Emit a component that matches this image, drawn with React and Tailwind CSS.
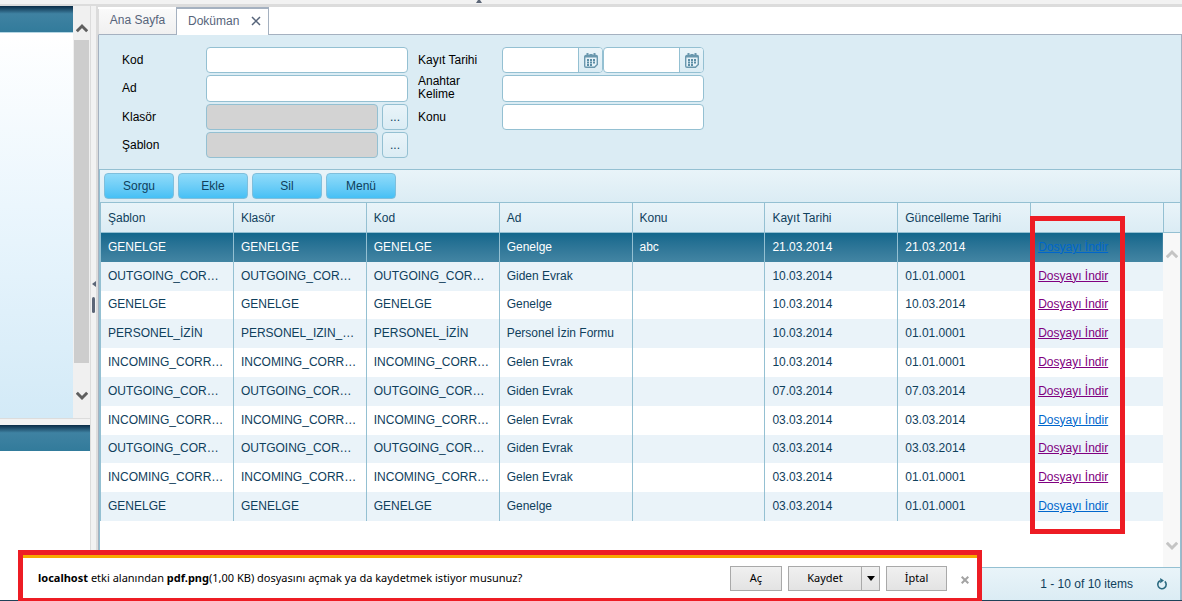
import React, { useState } from 'react'

const columns = ['Şablon', 'Klasör', 'Kod', 'Ad', 'Konu', 'Kayıt Tarihi', 'Güncelleme Tarihi', '']

const documents = [
  { id: 1, sablon: 'GENELGE', klasor: 'GENELGE', kod: 'GENELGE', ad: 'Genelge', konu: 'abc', kayit: '21.03.2014', guncelleme: '21.03.2014', visited: false },
  { id: 2, sablon: 'OUTGOING_COR…', klasor: 'OUTGOING_COR…', kod: 'OUTGOING_COR…', ad: 'Giden Evrak', konu: '', kayit: '10.03.2014', guncelleme: '01.01.0001', visited: true },
  { id: 3, sablon: 'GENELGE', klasor: 'GENELGE', kod: 'GENELGE', ad: 'Genelge', konu: '', kayit: '10.03.2014', guncelleme: '10.03.2014', visited: true },
  { id: 4, sablon: 'PERSONEL_İZİN', klasor: 'PERSONEL_IZIN_…', kod: 'PERSONEL_İZİN', ad: 'Personel İzin Formu', konu: '', kayit: '10.03.2014', guncelleme: '01.01.0001', visited: true },
  { id: 5, sablon: 'INCOMING_CORR…', klasor: 'INCOMING_CORR…', kod: 'INCOMING_CORR…', ad: 'Gelen Evrak', konu: '', kayit: '10.03.2014', guncelleme: '01.01.0001', visited: true },
  { id: 6, sablon: 'OUTGOING_COR…', klasor: 'OUTGOING_COR…', kod: 'OUTGOING_COR…', ad: 'Giden Evrak', konu: '', kayit: '07.03.2014', guncelleme: '07.03.2014', visited: true },
  { id: 7, sablon: 'INCOMING_CORR…', klasor: 'INCOMING_CORR…', kod: 'INCOMING_CORR…', ad: 'Gelen Evrak', konu: '', kayit: '03.03.2014', guncelleme: '03.03.2014', visited: false },
  { id: 8, sablon: 'OUTGOING_COR…', klasor: 'OUTGOING_COR…', kod: 'OUTGOING_COR…', ad: 'Giden Evrak', konu: '', kayit: '03.03.2014', guncelleme: '03.03.2014', visited: true },
  { id: 9, sablon: 'INCOMING_CORR…', klasor: 'INCOMING_CORR…', kod: 'INCOMING_CORR…', ad: 'Gelen Evrak', konu: '', kayit: '03.03.2014', guncelleme: '01.01.0001', visited: true },
  { id: 10, sablon: 'GENELGE', klasor: 'GENELGE', kod: 'GENELGE', ad: 'Genelge', konu: '', kayit: '03.03.2014', guncelleme: '01.01.0001', visited: false },
]

const inputStyle = 'w-full min-w-0 rounded border border-[#94c0d2] bg-white px-2 outline-none'
const disabledStyle = 'w-full min-w-0 rounded border border-[#94c0d2] bg-[#d3d3d3] px-2 outline-none'

function Chevron({ down, className }) {
  return (
    <svg viewBox="0 0 12 10" className={className} fill="none" stroke="currentColor" strokeWidth="3">
      {down ? <path d="M0.8 1.8 L6 7 L11.2 1.8" /> : <path d="M0.8 8.2 L6 3 L11.2 8.2" />}
    </svg>
  )
}

function CalendarIcon() {
  return (
    <svg viewBox="0 0 14 15" className="h-[15px] w-[14px]">
      <path d="M2 2.5h10a1.3 1.3 0 0 1 1.3 1.3v7.7l-2.8 2.8H2A1.3 1.3 0 0 1 .7 13V3.8A1.3 1.3 0 0 1 2 2.5z" fill="#e6f2f8" stroke="#6a98ae" strokeWidth="1.4" />
      <path d="M.7 2.5h12.6v2H.7z" fill="#6a98ae" />
      <path d="M2.5 0h2v3h-2zM9.5 0h2v3h-2z" fill="#6a98ae" />
      <path d="M5.5 1h3v1h-3z" fill="#6a98ae" />
      <path d="M3 6h2v2H3zM6 6h2v2H6zM9 6h2v2H9zM3 8.5h2v2H3zM6 8.5h2v2H6zM9 8.5h2v2H9zM3 11h2v2H3zM6 11h2v2H6z" fill="#5b8da5" />
    </svg>
  )
}

function DateBox({ id, label }) {
  return (
    <div className="flex min-w-0 flex-1 overflow-hidden rounded border border-[#94c0d2] bg-white">
      <input id={id} type="text" aria-label={label} className="w-full min-w-0 flex-1 px-2 outline-none" />
      <button type="button" aria-label="Takvim" className="flex w-6 shrink-0 items-center justify-center border-l border-[#94c0d2] bg-linear-to-b from-[#e9f4f9] to-[#dbecf4]">
        <CalendarIcon />
      </button>
    </div>
  )
}

function PickButton({ label }) {
  return (
    <button type="button" aria-label={label} className="w-[26px] shrink-0 rounded border border-[#94c0d2] bg-linear-to-b from-[#e9f4f9] to-[#dbecf4] text-[#0f405c]">
      ...
    </button>
  )
}

function SidePanel() {
  return (
    <aside className="flex w-[90px] shrink-0 flex-col bg-white">
      <div className="flex h-[412px] shrink-0">
        <div className="flex min-w-0 flex-1 flex-col">
          <div className="h-[26px] shrink-0 bg-linear-to-b from-[#0a2c47] via-[#3f82a2] via-30% to-[#327b9b]" />
          <div className="flex-1 border-t border-[#b5d6e3] bg-linear-to-b from-white via-[#ebf6fd] via-45% to-[#d3eaf7]" />
        </div>
        {/* Scrollbar */}
        <div className="flex w-[17px] shrink-0 flex-col items-center bg-[#f0f0f0] text-[#5f5f5f]">
          <div className="flex h-[34px] w-full items-end justify-center pb-[7px]">
            <Chevron className="h-[10px] w-[12px]" />
          </div>
          <div className="h-[323px] w-[15px] bg-[#cdcdcd]" />
          <div className="flex h-[55px] items-start pt-7">
            <Chevron down className="h-[10px] w-[12px]" />
          </div>
        </div>
      </div>
      <div className="h-[7px] shrink-0 border-t border-[#dcdcdc] bg-[#f2f2f2]" />
      <div className="h-[26px] shrink-0 bg-linear-to-b from-[#0a2c47] via-[#3f82a2] via-30% to-[#327b9b]" />
    </aside>
  )
}

function Splitter() {
  return (
    <div className="flex w-2 shrink-0 flex-col items-center justify-center border-l border-r-2 border-[#dcdcdc] bg-[#f2f2f2] pb-1 text-[#5c6677]">
      <svg viewBox="0 0 4 6" className="h-[6px] w-[4px]" fill="currentColor">
        <path d="M4 0v6L0 3z" />
      </svg>
      <div className="mt-[10px] mb-2 h-4 w-[3px] rounded bg-[#5c6677]" />
    </div>
  )
}

function Tabs() {
  return (
    <div role="tablist" className="flex h-[28px] shrink-0 text-[#56647a]">
      <button type="button" role="tab" aria-selected="false" className="mt-[2px] w-[78px] border-b border-l border-b-[#a5b1c0] border-l-[#dcdcdc] bg-linear-to-b from-[#fafafa] to-[#f0f0f0] pb-1">
        Ana Sayfa
      </button>
      <div className="flex w-[93px] items-center justify-between border-x border-t-2 border-[#a5b1c0] bg-white pr-[7px] pb-[3px] pl-[11px]">
        <button type="button" role="tab" aria-selected="true">Doküman</button>
        <button type="button" aria-label="Kapat">
          <svg viewBox="0 0 10 10" className="h-[10px] w-[10px]" fill="none" stroke="currentColor" strokeWidth="1.5">
            <path d="M1 1l8 8M9 1l-8 8" />
          </svg>
        </button>
      </div>
      <div className="flex-1 border-b border-[#a5b1c0]" />
    </div>
  )
}

function SearchForm() {
  return (
    <form className="flex h-[134px] shrink-0 gap-[10px] pt-3 pl-[23px] text-black">
      <div className="grid h-[111px] w-[286px] grid-cols-[84px_202px] grid-rows-4 gap-y-[2px]">
        <label htmlFor="kod" className="self-center">Kod</label>
        <input id="kod" type="text" className={inputStyle} />
        <label htmlFor="ad" className="self-center">Ad</label>
        <input id="ad" type="text" className={inputStyle} />
        <label htmlFor="klasor" className="self-center">Klasör</label>
        <div className="flex gap-1">
          <input id="klasor" type="text" disabled className={disabledStyle} />
          <PickButton label="Klasör seç" />
        </div>
        <label htmlFor="sablon" className="self-center">Şablon</label>
        <div className="flex gap-1">
          <input id="sablon" type="text" disabled className={disabledStyle} />
          <PickButton label="Şablon seç" />
        </div>
      </div>
      <div className="grid h-[111px] w-[286px] grid-cols-[84px_202px] grid-rows-4 gap-y-[2px]">
        <label htmlFor="tarih" className="self-center">Kayıt Tarihi</label>
        <div className="flex">
          <DateBox id="tarih" label="Kayıt Tarihi" />
          <DateBox id="tarih2" label="Kayıt Tarihi bitiş" />
        </div>
        <label htmlFor="anahtar" className="w-12 self-center leading-[13px]">Anahtar Kelime</label>
        <input id="anahtar" type="text" className={inputStyle} />
        <label htmlFor="konu" className="self-center">Konu</label>
        <input id="konu" type="text" className={inputStyle} />
      </div>
    </form>
  )
}

function Toolbar() {
  return (
    <div className="flex h-8 shrink-0 items-start gap-1 bg-linear-to-b from-[#e9f4f9] to-[#dbecf4] px-1 pt-[3px]">
      {['Sorgu', 'Ekle', 'Sil', 'Menü'].map((name) => (
        <button key={name} type="button" className="h-[26px] w-[70px] rounded border border-[#7fbfdc] bg-linear-to-b from-[#8fdbf9] to-[#45c0f5] text-[#0f405c]">
          {name}
        </button>
      ))}
    </div>
  )
}

function DocumentTable() {
  const [selected, setSelected] = useState(1)

  const rowStyle = (doc, i) => {
    if (doc.id === selected) return 'bg-linear-to-b from-[#12678c] to-[#4385a3] text-white'
    return i % 2 ? 'bg-[#eaf3f9]' : 'bg-white'
  }

  return (
    <div className="flex min-h-0 flex-1 flex-col">
      <div className="flex min-h-0 flex-1">
        <div className="min-w-0 flex-1 bg-white">
          <table className="h-[319px] w-full table-fixed border-separate border-spacing-0 text-left">
            <thead>
              <tr className="h-[31px] bg-linear-to-b from-[#e9f4f9] to-[#dbecf4]">
                {columns.map((col) => (
                  <th key={col} className="border-y border-l border-[#94c0d2] px-[7px] font-normal">{col}</th>
                ))}
              </tr>
            </thead>
            <tbody>
              {documents.map((doc, i) => (
                <tr key={doc.id} className={rowStyle(doc, i)} onClick={() => setSelected(doc.id)}>
                  {[doc.sablon, doc.klasor, doc.kod, doc.ad, doc.konu, doc.kayit, doc.guncelleme].map((value, c) => (
                    <td key={c} className="truncate border-l border-[#94c0d2] pb-px pl-[7px]">{value}</td>
                  ))}
                  <td className="truncate border-l border-[#94c0d2] pb-px pl-[7px]">
                    <a href="#" className={doc.visited ? 'text-[#800080] underline' : 'text-[#0066cc] underline'}>
                      Dosyayı İndir
                    </a>
                  </td>
                </tr>
              ))}
            </tbody>
          </table>
        </div>
        {/* Scrollbar */}
        <div className="flex w-[17px] shrink-0 flex-col">
          <div className="h-[31px] shrink-0 border-y border-l border-[#94c0d2] bg-linear-to-b from-[#e9f4f9] to-[#dbecf4]" />
          <div className="flex flex-1 flex-col items-center justify-between bg-[#f8f8f8] py-4 text-[#c4c4c4]">
            <Chevron className="h-[10px] w-[12px]" />
            <Chevron down className="h-[10px] w-[12px]" />
          </div>
        </div>
      </div>
      <div className="flex h-[33px] shrink-0 items-center justify-end gap-[23px] border-t border-[#94c0d2] bg-linear-to-b from-[#e9f4f9] to-[#dbecf4] pr-3">
        <span>1 - 10 of 10 items</span>
        <button type="button" aria-label="Yenile">
          <svg viewBox="0 0 12 12" className="h-3 w-3" fill="none" stroke="#2b6a80" strokeWidth="1.6">
            <path d="M4 2.8A4.2 4.2 0 1 0 8.8 3.4" />
            <path d="M4.2 0v5.2L8 2.6z" fill="#2b6a80" stroke="none" />
          </svg>
        </button>
      </div>
    </div>
  )
}

function DownloadBar() {
  const btn = 'border border-[#a9a9a9] bg-linear-to-b from-[#f0f0f0] to-[#e3e3e3]'
  return (
    <div className="absolute right-[200px] bottom-0 left-[18px] flex h-[51px] flex-col border-5 border-b-3 border-[#ed1c24] bg-white font-['Noto_Sans','Open_Sans',sans-serif] text-[11px] text-black">
      <div className="h-[3px] shrink-0 bg-[#f7a800]" />
      <div className="flex flex-1 items-center pr-2 pl-[15px]">
        <p className="min-w-0 flex-1 truncate">
          <b>localhost</b> etki alanından <b>pdf.png</b>(1,00 KB) dosyasını açmak ya da kaydetmek istiyor musunuz?
        </p>
        <div className="flex h-[25px] gap-[6px]">
          <button type="button" className={`${btn} w-[52px]`}>Aç</button>
          <div className="flex">
            <button type="button" className={`${btn} w-[74px]`}>Kaydet</button>
            <button type="button" aria-label="Kaydet seçenekleri" className={`${btn} flex w-[18px] items-center justify-center border-l-0`}>
              <svg viewBox="0 0 8 5" className="h-[5px] w-[8px]"><path d="M0 0h8L4 5z" /></svg>
            </button>
          </div>
          <button type="button" className={`${btn} w-[61px]`}>İptal</button>
        </div>
        <button type="button" aria-label="Kapat" className="ml-[14px] pt-1">
          <svg viewBox="0 0 8 8" className="h-2 w-2" fill="none" stroke="#a3a3a3" strokeWidth="2">
            <path d="M.7.7l6.6 6.6M7.3.7L.7 7.3" />
          </svg>
        </button>
      </div>
    </div>
  )
}

function App() {
  return (
    <div className="relative flex h-screen flex-col overflow-hidden bg-white font-['Liberation_Sans',Arial,sans-serif] text-[12px] leading-4 text-[#0f405c]">
      {/* Top splitter */}
      <div className="flex h-[6px] shrink-0 justify-center border-b-2 border-[#dcdcdc] bg-[#f2f2f2] pr-[224px]">
        <svg viewBox="0 0 6 3" className="h-[3px] w-[6px]" fill="#5c6677"><path d="M0 3h6L4 0H2z" /></svg>
      </div>

      <div className="flex min-h-0 flex-1 border-b border-[#1f4259]">
        <SidePanel />
        <Splitter />
        <main className="flex min-w-0 flex-1 flex-col border-t border-[#dcdcdc]">
          <Tabs />
          <div className="flex min-h-0 flex-1 flex-col border-x border-[#a5b1c0] bg-[#dbecf4]">
            <SearchForm />
            <div className="flex min-h-0 flex-1 flex-col border-x border-t border-[#94c0d2]">
              <Toolbar />
              <DocumentTable />
            </div>
          </div>
        </main>
      </div>

      {/* Highlight around the download links */}
      <div className="pointer-events-none absolute top-[216px] right-[57px] h-[318px] w-[95px] border-5 border-[#ed1c24]" />
      <DownloadBar />
    </div>
  )
}

export default App
